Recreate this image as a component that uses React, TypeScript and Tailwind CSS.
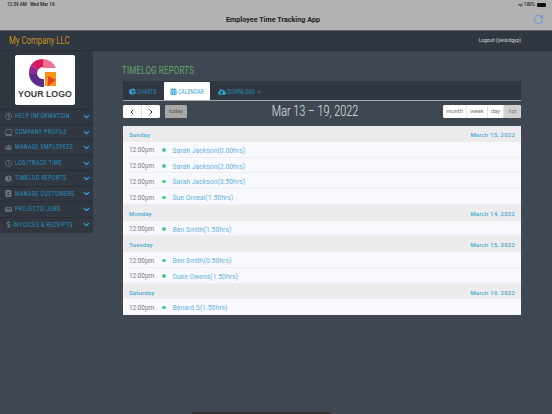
import React from "react";
import { ChevronLeft, ChevronRight, RotateCw, ChevronDown } from "lucide-react";
import { FaRegQuestionCircle, FaTabletAlt, FaUsers, FaRegClock, FaChartPie, FaAddressBook, FaNewspaper, FaDollarSign, FaCalendarAlt, FaCloudDownloadAlt, FaWifi } from "react-icons/fa";

const menu = [
  { label: "HELP INFORMATION", Icon: FaRegQuestionCircle, ml: "ml-[3px]", tw: "w-[55px]" },
  { label: "COMPANY PROFILE", Icon: FaTabletAlt, ml: "ml-[3px]", tw: "w-[53px]" },
  { label: "MANAGE EMPLOYEES", Icon: FaUsers, ml: "ml-[3px]", tw: "w-[59px]" },
  { label: "LOG/TRACK TIME", Icon: FaRegClock, ml: "ml-[3px]", tw: "w-[47px]" },
  { label: "TIMELOG REPORTS", Icon: FaChartPie, ml: "ml-[3px]", tw: "w-[52px]" },
  { label: "MANAGE CUSTOMERS", Icon: FaAddressBook, ml: "ml-[3px]", tw: "w-[59px]" },
  { label: "PROJECTS/JOBS", Icon: FaNewspaper, ml: "ml-[3px]", tw: "w-[46px]" },
  { label: "INVOICES & RECEIPTS", Icon: FaDollarSign, ml: "ml-[1px]", tw: "w-[62px]" },
];

type Row = { day: string; date: string } | { name: string };
const rows: Row[] = [
  { day: "Sunday", date: "March 13, 2022" },
  { name: "Sarah Jackson(0.00hrs)" },
  { name: "Sarah Jackson(2.00hrs)" },
  { name: "Sarah Jackson(3.50hrs)" },
  { name: "Sue Orneal(1.50hrs)" },
  { day: "Monday", date: "March 14, 2022" },
  { name: "Ben Smith(1.50hrs)" },
  { day: "Tuesday", date: "March 15, 2022" },
  { name: "Ben Smith(0.50hrs)" },
  { name: "Duke Owens(1.50hrs)" },
  { day: "Saturday", date: "March 19, 2022" },
  { name: "Benard S(1.50hrs)" },
];

function Logo() {
  return (
    <svg viewBox="0 0 60 50" className="h-[50px] w-[60px]">
      <path d="M28 4 A14 14 0 0 0 16 10 L23 15 A6 6 0 0 1 28 12 Z" fill="#d81b60" />
      <path d="M28 4 A14 14 0 0 1 41 13 L28 13 Z" fill="#f0708f" />
      <path d="M16 10 A14 14 0 0 0 14 19 L22 19 A6 6 0 0 1 23 15 Z" fill="#8e2a8f" />
      <path d="M14 19 A14 14 0 0 0 29 32 L29 24 A6 6 0 0 1 22 19 Z" fill="#5b2c8e" />
      <path d="M30 17 H41 V31 H30 Z" fill="#f7941d" />
      <path d="M33 21 L41 25 L33 31 Z" fill="#e8431f" />
      <text x="30" y="42" textAnchor="middle" fontSize="8.8" fontWeight="700" fill="#3a3a3a" fontFamily="Liberation Sans, sans-serif">YOUR LOGO</text>
    </svg>
  );
}

export default function App() {
  return (
    <div className="relative flex h-[414px] w-[552px] flex-col overflow-hidden bg-[#3f4852]" style={{ fontFamily: 'Roboto, sans-serif' }}>
      <header className="h-[31px] shrink-0 border-b border-[#5a5f66] bg-[#b2b2b2]">
        <div className="flex h-[10px] items-center justify-between pl-[7px] pr-[6px] pt-[1px] text-[4.6px] text-[#222]">
          <span className="flex gap-[3px] font-medium"><span>12:39 AM</span><span>Wed Mar 16</span></span>
          <span className="flex items-center gap-[1px] font-medium">
            <FaWifi size={5} />
            <span>100%</span>
            <span className="ml-[1px] h-[4px] w-[9px] rounded-[1px] bg-[#111]" />
          </span>
        </div>
        <div className="relative flex h-[20px] items-center justify-center pr-[6px]">
          <span className="text-[7.2px] font-bold text-[#1c1c1c]">Employee Time Tracking App</span>
          <RotateCw size={11} strokeWidth={1.6} className="absolute right-[8px] top-[4px] text-[#4a90e2]" />
        </div>
      </header>

      <div className="flex h-[20px] shrink-0 items-center justify-between border-b border-[#2a3038] bg-[#303741] pl-[9px] pr-[31px]">
        <span className="w-[60px] origin-left scale-x-[0.78] whitespace-nowrap text-[10px] text-[#c8921f]">My Company LLC</span>
        <span className="text-[5px] text-[#d5d8dc]">Logout (ljwisidgyp)</span>
      </div>

      <div className="flex min-h-0 flex-1">
        <aside className="h-[182px] w-[93px] shrink-0 bg-[#303741]">
          <div className="flex h-[57.5px] items-start pl-[15px] pt-[4px]">
            <div className="h-[50px] w-[60px] overflow-hidden rounded-[2px] bg-white"><Logo /></div>
          </div>
          {menu.map(({ label, Icon, ml, tw }) => (
            <div key={label} className="flex h-[15.45px] items-center border-t border-[#282e36] pl-[5px] pr-[2px]">
              <span className="flex w-[7px] shrink-0 justify-center text-[#6d7680]"><Icon size={7} /></span>
              <span className={`${ml} ${tw} origin-left scale-x-[0.72] whitespace-nowrap text-[7px] tracking-[0.7px] text-[#2a93c0]`}>{label}</span>
              <span className="flex-1" />
              <ChevronDown size={9} strokeWidth={3.5} className="shrink-0 text-[#2ba7d8]" />
            </div>
          ))}
        </aside>

        <main className="min-w-0 flex-1 pl-[30px] pr-[31px] pt-[13px]">
          <h1 className="-ml-[1px] h-[17px] w-[72px] origin-left scale-x-[0.72] whitespace-nowrap text-[11px] leading-[13px] tracking-[0.3px] text-[#65a765]">TIMELOG REPORTS</h1>

          <nav className="flex h-[20px] items-end border-b border-[#a5abb1] bg-[#303741] pl-[6px] text-[6.4px]">
            <span className="flex h-[18px] w-[35px] items-center gap-[1px] pt-[1px] text-[#2b8db5]">
              <FaChartPie size={7} className="text-[#2f9fd0]" />
              <span className="w-[20px] origin-left scale-x-[0.8] whitespace-nowrap pt-[2px]">CHARTS</span>
            </span>
            <span className="flex h-[18px] w-[46px] items-center justify-center gap-[1px] rounded-t-[1px] bg-white pt-[1px] text-[#3aa3cf]">
              <FaCalendarAlt size={7} />
              <span className="w-[27px] origin-left scale-x-[0.8] whitespace-nowrap pt-[2px]">CALENDAR</span>
            </span>
            <span className="ml-[8px] flex h-[18px] items-center gap-[1px] pt-[1px] text-[#2b8db5]">
              <FaCloudDownloadAlt size={8} className="text-[#2f9fd0]" />
              <span className="w-[30px] origin-left scale-x-[0.8] whitespace-nowrap pt-[2px]">DOWNLOAD</span>
              <span className="h-0 w-0 border-x-[1.5px] border-t-[2px] border-x-transparent border-t-[#2f9fd0]" />
            </span>
          </nav>

          <div className="flex h-[25px] items-start justify-between pt-[4px]">
            <div className="flex items-center gap-[5px]">
              <div className="flex h-[13px] w-[37px] rounded-[1.5px] bg-white text-[#333]">
                <span className="flex flex-1 items-center justify-center border-r border-[#ddd]"><ChevronLeft size={8} strokeWidth={3} /></span>
                <span className="flex flex-1 items-center justify-center"><ChevronRight size={8} strokeWidth={3} /></span>
              </div>
              <span className="flex h-[13px] w-[22px] items-center justify-center rounded-[1.5px] bg-[#a9a9a9] text-[5.6px] text-[#555]">today</span>
            </div>
            <span className="origin-center scale-x-[0.72] whitespace-nowrap text-[15px] font-light leading-[13px] text-[#e3e5e7]">Mar 13 – 19, 2022</span>
            <div className="flex h-[13px] w-[78px] rounded-[1.5px] bg-white text-[5.8px] text-[#777]">
              <span className="flex w-[24px] items-center justify-center border-r border-[#e5e5e5]">month</span>
              <span className="flex w-[21px] items-center justify-center border-r border-[#e5e5e5]">week</span>
              <span className="flex w-[16px] items-center justify-center border-r border-[#e5e5e5]">day</span>
              <span className="flex flex-1 items-center justify-center rounded-r-[1.5px] bg-[#d0d0d0]">list</span>
            </div>
          </div>

          <section className="bg-[#f8f8ff]">
            {rows.map((r, i) =>
              "day" in r ? (
                <div key={i} className="flex h-[15.75px] items-center justify-between bg-[#ececec] px-[6px] pt-[1.5px] text-[6px] font-medium tracking-[0.2px] text-[#47a8d0]">
                  <span>{r.day}</span>
                  <span>{r.date}</span>
                </div>
              ) : (
                <div key={i} className="flex h-[15.75px] items-center border-b border-[#eeeef4] pl-[6px]">
                  <span className="w-[33px] pt-[4px] text-[6.4px] text-[#7a7a7a]">12:00pm</span>
                  <span className="mt-[2px] h-[3.5px] w-[3.5px] rounded-full bg-[#4fc79a]" />
                  <span className="ml-[7px] pt-[4px] text-[6.85px] text-[#67b5d8]">{r.name}</span>
                </div>
              )
            )}
          </section>
        </main>
      </div>
      <div className="absolute bottom-0 left-[192px] h-[2px] w-[139px] bg-[#37352f]" />
    </div>
  );
}
